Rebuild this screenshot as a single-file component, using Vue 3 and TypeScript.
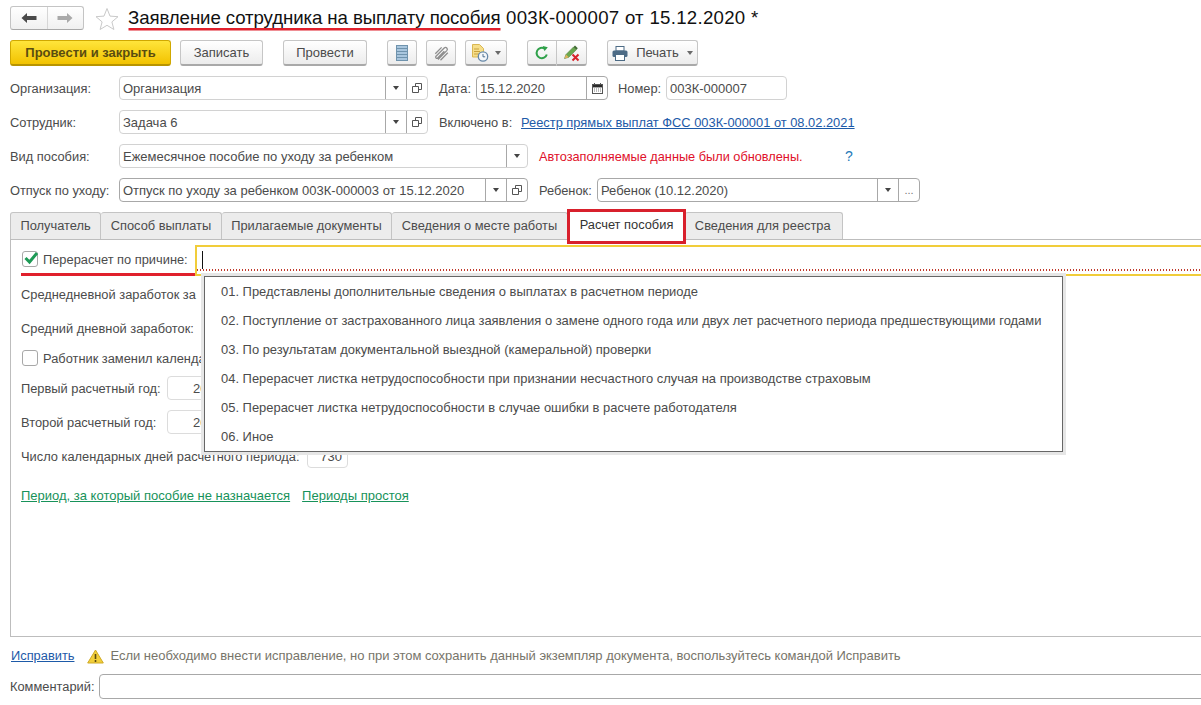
<script setup lang="ts">
const tabs: string[] = [
  'Получатель',
  'Способ выплаты',
  'Прилагаемые документы',
  'Сведения о месте работы',
  'Расчет пособия',
  'Сведения для реестра',
]
const activeTab = 'Расчет пособия'
const options: string[] = [
  '01. Представлены дополнительные сведения о выплатах в расчетном периоде',
  '02. Поступление от застрахованного лица заявления о замене одного года или двух лет расчетного периода предшествующими годами',
  '03. По результатам документальной выездной (камеральной) проверки',
  '04. Перерасчет листка нетрудоспособности при признании несчастного случая на производстве страховым',
  '05. Перерасчет листка нетрудоспособности в случае ошибки в расчете работодателя',
  '06. Иное',
]
</script>

<template>
  <div class="page">
    <header class="head">
      <div class="nav">
        <button class="nav-btn">
          <svg width="16" height="12" viewBox="0 0 16 12"><path d="M0.5 6 6 1v3h9.500v4H6v3z" fill="#4a4a4a" /></svg>
        </button>
        <button class="nav-btn">
          <svg width="16" height="12" viewBox="0 0 16 12"><path d="M15.500 6 10 1v3H.5v4H10v3z" fill="#a9a9a9" /></svg>
        </button>
      </div>
      <svg class="star" width="24" height="23" viewBox="0 0 24 23"><path d="M12 1.500l3 7.600 8 .6-6.100 5.200 2 7.600L12 18.300l-6.900 4.200 2-7.600L1 9.700l8-.6z" fill="#fff" stroke="#c9c9c9" /></svg>
      <h1 class="title"><span class="title-mark">Заявление сотрудника на выплату пособия</span> 003К-000007 от 15.12.2020 *</h1>
    </header>

    <div class="toolbar">
      <button class="btn primary">Провести и закрыть</button>
      <button class="btn save">Записать</button>
      <button class="btn post">Провести</button>
      <button class="btn icon list">
        <svg width="12" height="16" viewBox="0 0 12 16">
          <rect x=".5" y=".5" width="11" height="15" fill="#a9c6de" stroke="#6f93ad" />
          <path d="M1 3.500h10M1 6.500h10M1 9.500h10M1 12.500h10" stroke="#6f93ad" />
        </svg>
      </button>
      <button class="btn icon clip">
        <svg width="17" height="17" viewBox="0 0 17 17"><path d="M5 14.500 13.800 5.600c1.600-1.800-.8-4.300-2.600-2.600L3 11.300c-1.100 1.200.6 2.800 1.700 1.700l6.600-6.700M7.500 15.200l7.300-7.400M2.300 8.800 8.600 2.400" fill="none" stroke="#8e8e8e" stroke-width="1.300" /></svg>
      </button>
      <button class="btn icon doc">
        <svg width="18" height="18" viewBox="0 0 18 18">
          <path d="M1.500.5h7l4 4V13h-11z" fill="#f6de8a" stroke="#d9b752" />
          <path d="M3 5h5M3 7.500h6M3 10h5" stroke="#c9a23c" />
          <circle cx="12" cy="12.500" r="4.700" fill="#f4f7fa" stroke="#6688a8" stroke-width="1.300" />
          <path d="M12 10v2.800h2.200" fill="none" stroke="#4d6f8f" />
        </svg>
        <i class="caret"></i>
      </button>
      <div class="btn-group">
        <button class="btn icon seg">
          <svg width="14" height="14" viewBox="0 0 14 14"><path d="M11.800 8.500A5.200 5.200 0 1 1 9.600 2.600" fill="none" stroke="#2fa14a" stroke-width="2" /><path d="M7.800.1l5 1.100-3.300 4z" fill="#2fa14a" /></svg>
        </button>
        <button class="btn icon seg">
          <svg width="18" height="18" viewBox="0 0 18 18">
            <path d="M1.500 14.500 3 10.500 10.500 3l2.800 2.800L5.800 13.300z" fill="#6aa84f" stroke="#54803f" stroke-width=".6" />
            <path d="M10.500 3 12 1.500l2.800 2.800L13.300 5.800z" fill="#3f6b32" />
            <path d="M1.500 14.500 3 10.500l2.800 2.800z" fill="#e3b35c" />
            <path d="M9.500 10.500l6 6M15.500 10.500l-6 6" stroke="#d8232a" stroke-width="2" />
          </svg>
        </button>
      </div>
      <button class="btn print">
        <svg width="16" height="15" viewBox="0 0 16 15">
          <rect x="4" y=".5" width="8" height="4.500" fill="#fff" stroke="#4d6b85" />
          <rect x=".5" y="4.500" width="15" height="6.500" rx="1.500" fill="#4d6b85" />
          <rect x="3.500" y="8.500" width="9" height="6" fill="#fff" stroke="#4d6b85" />
        </svg>
        <span>Печать</span>
        <i class="caret"></i>
      </button>
    </div>

    <div class="row">
      <span class="label lbl-main">Организация:</span>
      <div class="field w-main">
        <span class="value">Организация</span>
        <span class="cell"><i class="caret dark"></i></span>
        <span class="cell">
          <svg width="10" height="10" viewBox="0 0 10 10"><path d="M3.500 3V.5h6v6H7M.5 3.500h6v6h-6z" fill="none" stroke="#555" /></svg>
        </span>
      </div>
      <span class="label lbl-date">Дата:</span>
      <div class="field w-date strong">
        <span class="value">15.12.2020</span>
        <span class="cell">
          <svg width="11" height="11" viewBox="0 0 11 11"><rect x=".5" y="1.500" width="10" height="9" fill="#fff" stroke="#555" /><path d="M.5 2h10v2H.5zM2.500 0v2M8.500 0v2" stroke="#555" /><path d="M2 6h7M2 8h7" stroke="#777" stroke-dasharray="1 1" /></svg>
        </span>
      </div>
      <span class="label lbl-num">Номер:</span>
      <div class="field w-num"><span class="value">003К-000007</span></div>
    </div>

    <div class="row">
      <span class="label lbl-main">Сотрудник:</span>
      <div class="field w-main">
        <span class="value">Задача 6</span>
        <span class="cell"><i class="caret dark"></i></span>
        <span class="cell">
          <svg width="10" height="10" viewBox="0 0 10 10"><path d="M3.500 3V.5h6v6H7M.5 3.500h6v6h-6z" fill="none" stroke="#555" /></svg>
        </span>
      </div>
      <span class="label lbl-inc">Включено в:</span>
      <a class="link row-link">Реестр прямых выплат ФСС 003К-000001 от 08.02.2021</a>
    </div>

    <div class="row">
      <span class="label lbl-main">Вид пособия:</span>
      <div class="field w-wide">
        <span class="value">Ежемесячное пособие по уходу за ребенком</span>
        <span class="cell"><i class="caret dark"></i></span>
      </div>
      <span class="alert">Автозаполняемые данные были обновлены.</span>
      <span class="help">?</span>
    </div>

    <div class="row">
      <span class="label lbl-main">Отпуск по уходу:</span>
      <div class="field w-wide strong">
        <span class="value">Отпуск по уходу за ребенком 003К-000003 от 15.12.2020</span>
        <span class="cell"><i class="caret dark"></i></span>
        <span class="cell">
          <svg width="10" height="10" viewBox="0 0 10 10"><path d="M3.500 3V.5h6v6H7M.5 3.500h6v6h-6z" fill="none" stroke="#555" /></svg>
        </span>
      </div>
      <span class="label lbl-child">Ребенок:</span>
      <div class="field w-child strong">
        <span class="value">Ребенок (10.12.2020)</span>
        <span class="cell"><i class="caret dark"></i></span>
        <span class="cell dots">...</span>
      </div>
    </div>

    <nav class="tabs">
      <span v-for="t in tabs" :key="t" class="tab" :class="{ active: t === activeTab }">{{ t }}</span>
    </nav>

    <section class="panel">
      <div class="reason">
        <div class="reason-label">
          <span class="check on">
            <svg width="16" height="14" viewBox="0 0 16 14"><path d="M2.500 7 6.500 11 14 2" fill="none" stroke="#1d9a56" stroke-width="3" /></svg>
          </span>
          <span class="p-text">Перерасчет по причине:</span>
        </div>
        <div class="reason-input"><i class="cursor"></i></div>
      </div>

      <div class="p-row first"><span class="p-text">Среднедневной заработок за</span></div>
      <div class="p-row"><span class="p-text">Средний дневной заработок:</span></div>
      <div class="p-row chk"><span class="check"></span><span class="p-text">Работник заменил календа</span></div>
      <div class="p-row"><span class="p-text lbl-year">Первый расчетный год:</span><span class="num year">2019</span></div>
      <div class="p-row"><span class="p-text lbl-year">Второй расчетный год:</span><span class="num year">2018</span></div>
      <div class="p-row"><span class="p-text lbl-days">Число календарных дней расчетного периода:</span><span class="num days">730</span></div>
      <div class="p-links">
        <a class="g-link">Период, за который пособие не назначается</a>
        <a class="g-link">Периоды простоя</a>
      </div>

      <ul class="dropdown">
        <li v-for="o in options" :key="o">{{ o }}</li>
      </ul>
    </section>

    <div class="note">
      <a class="link">Исправить</a>
      <svg class="warn" width="17" height="15" viewBox="0 0 17 15"><path d="M8.500 1 16.300 14H.7z" fill="#f2cf3a" stroke="#cfa924" stroke-linejoin="round" /><path d="M8.500 5v5M8.500 11v2" stroke="#5a4a10" stroke-width="1.600" /></svg>
      <span class="note-text">Если необходимо внести исправление, но при этом сохранить данный экземпляр документа, воспользуйтесь командой Исправить</span>
    </div>

    <div class="comment">
      <span class="lbl-comment">Комментарий:</span>
      <div class="field comment-field strong"></div>
    </div>
  </div>
</template>

<style>
html, body { margin: 0; background: #fff; overflow: hidden; }
</style>

<style scoped>
.page {
  width: 1201px;
  height: 705px;
  overflow: hidden;
  background: #fff;
  color: #4b4b4b;
  font: 13px/16px "Liberation Sans", Arial, sans-serif;
  box-sizing: border-box;
  padding-top: 6px;
}
.head { display: flex; align-items: center; height: 24px; padding-left: 10px; }
.nav {
  display: flex; flex: none; width: 74px; height: 24px; box-sizing: border-box;
  border: 1px solid #c4c4c4; border-bottom-color: #a8a8a8; border-radius: 3px;
  background: linear-gradient(#fff, #f0f0f0);
}
.nav-btn { flex: 1; border: 0; background: none; padding: 0; display: flex; align-items: center; justify-content: center; }
.nav-btn + .nav-btn { border-left: 1px solid #d6d6d6; }
.star { margin-left: 11px; }
.title { margin: 0 0 0 9px; font-size: 18.67px; line-height: 24px; font-weight: 400; color: #111; letter-spacing: .27px; white-space: nowrap; }
.title-mark { letter-spacing: -.1px; box-shadow: 0 3px 0 -0.5px #e0202c; }

.toolbar { display: flex; height: 26px; margin: 10px 0 0 10px; }
.btn {
  flex: none; box-sizing: border-box; height: 26px; padding: 1px 0 0;
  border: 1px solid #c6c6c6; border-bottom: 2px solid #a9a9a9; border-radius: 3px;
  background: linear-gradient(#fff, #ececec);
  font: inherit; color: #4b4b4b;
  display: flex; align-items: center; justify-content: center;
}
.primary { width: 161px; border-color: #d0a800; border-bottom-color: #b89400; background: linear-gradient(#ffe53b, #f2c200); font-weight: 700; color: #5a4c10; }
.save { width: 83px; margin-left: 9px; }
.post { width: 84px; margin-left: 20px; }
.icon { width: 30px; }
.list { margin-left: 20px; }
.clip { margin-left: 9px; }
.doc { width: 42px; margin-left: 9px; gap: 6px; }
.btn-group { display: flex; margin-left: 20px; }
.seg { border-radius: 3px 0 0 3px; }
.seg + .seg { border-left: 0; border-radius: 0 3px 3px 0; }
.print { width: 91px; margin-left: 20px; gap: 8px; }
.caret { display: inline-block; width: 0; height: 0; border: 3.500px solid transparent; border-top: 4px solid #6a6a6a; border-bottom: 0; }
.caret.dark { border-top-color: #444; }

.row { display: flex; align-items: center; height: 24px; margin: 10px 0 0 10px; white-space: nowrap; }
.label { flex: none; font-size: 12.85px; padding-top: 2px; }
.lbl-main { width: 109px; }
.lbl-date { width: 37px; margin-left: 11px; }
.lbl-num { width: 48px; margin-left: 10px; }
.lbl-inc { width: 82px; margin-left: 11px; }
.lbl-child { width: 58px; margin-left: 11px; }
.field {
  flex: none; box-sizing: border-box; display: flex; height: 24px;
  border: 1px solid #d2d2d2; border-radius: 4px; background: #fff; color: #4b4b4b;
}
.field.strong { border-color: #a8a8a8; }
.w-main { width: 309px; }
.w-wide { width: 409px; }
.w-date { width: 132px; }
.w-num { width: 121px; }
.w-child { width: 323px; }
.value { flex: 1; min-width: 0; padding-left: 3px; line-height: 24px; height: 22px; overflow: hidden; }
.cell { flex: none; width: 20px; border-left: 1px solid #a8a8a8; display: flex; align-items: center; justify-content: center; }
.dots { line-height: 22px; font-size: 11px; color: #777; }
.link { color: #1d5aa8; text-decoration: underline; }
.row-link { font-size: 12.87px; padding-top: 2px; }
.alert { flex: none; width: 306px; margin-left: 11px; padding-top: 2px; font-size: 12.75px; color: #e0102a; }
.help { color: #1f7ab8; font-size: 14px; }

.tabs { display: flex; height: 27px; margin: 10px 0 0 10px; position: relative; font-size: 12.85px; }
.tab {
  box-sizing: border-box; padding: 0 9.500px; line-height: 25px;
  background: #ececec; border: 1px solid #c4c4c4; border-bottom: 0; border-left-width: 0;
  border-radius: 3px 3px 0 0; white-space: nowrap;
}
.tab:first-child { border-left-width: 1px; }
.tab:last-child { padding-right: 11px; }
.tab.active { background: #fff; color: #333; padding: 0 12px; position: relative; z-index: 2; outline: 3px solid #d8202c; outline-offset: -2px; height: 33px; margin-top: -2px; line-height: 29px; border: 0; border-radius: 0; }

.panel {
  position: relative; box-sizing: border-box; height: 398px; margin-left: 10px; padding: 5px 0 0 10px;
  border-left: 1px solid #bdbdbd; border-top: 1px solid #bdbdbd; border-bottom: 1px solid #bdbdbd;
}
.p-text { font-size: 12.85px; padding-top: 2px; }
.reason { display: flex; height: 30px; }
.reason-label { box-sizing: border-box; flex: none; width: 174px; height: 31px; display: flex; align-items: center; gap: 5px; padding-left: 1px; border-bottom: 3px solid #e0202c; }
.check { flex: none; box-sizing: border-box; width: 16px; height: 16px; border: 1px solid #a8a8a8; border-radius: 3px; background: #fff; display: block; position: relative; }
.check.on svg { position: absolute; left: 0; top: -1px; }
.reason-input { flex: 1; box-sizing: border-box; height: 31px; border-top: 2px solid #f1cd3a; border-bottom: 2px solid #f1cd3a; border-left: 2px solid #f1cd3a; padding: 4px 0 0 5px; }
.reason-input { background-image: radial-gradient(circle, #c0392b .6px, transparent .7px); background-size: 3px 2px; background-repeat: repeat-x; background-position: 5px 22px; }
.cursor { display: block; width: 1px; height: 18px; background: #111; }
.p-row { display: flex; align-items: center; height: 24px; margin-top: 10px; white-space: nowrap; }
.p-row.first { margin-top: 7px; }
.p-row.chk { height: 16px; gap: 5px; padding-left: 1px; }
.lbl-year { flex: none; width: 146px; }
.lbl-days { flex: none; width: 286px; }
.num { flex: none; box-sizing: border-box; height: 24px; border: 1px solid #dcdcdc; border-radius: 4px; text-align: right; padding-right: 5px; line-height: 23px; }
.year { width: 61px; }
.days { width: 41px; }
.p-links { display: flex; gap: 12px; margin-top: 15px; height: 24px; line-height: 26px; }
.g-link { color: #17925a; text-decoration: underline; }
.dropdown {
  position: absolute; left: 193px; top: 36px; box-sizing: border-box; width: 859px; height: 176px;
  margin: 0; padding: 0; list-style: none; background: #fff; border: 1px solid #666;
  box-shadow: 0 0 0 3px #e6e6e6; font-size: 12.95px;
}
.dropdown li { height: 29px; line-height: 29px; padding-left: 16px; white-space: nowrap; }

.note { display: flex; align-items: center; height: 24px; margin: 7px 0 0 11px; white-space: nowrap; }
.note .link { font-size: 12.85px; }
.warn { flex: none; margin-left: 13px; }
.note-text { margin-left: 6px; color: #77756a; letter-spacing: -.02px; }
.comment { display: flex; align-items: center; height: 25px; margin: 6px 0 0 10px; }
.lbl-comment { flex: none; width: 89px; font-size: 12.85px; }
.comment-field { width: 1110px; height: 25px; }
</style>
